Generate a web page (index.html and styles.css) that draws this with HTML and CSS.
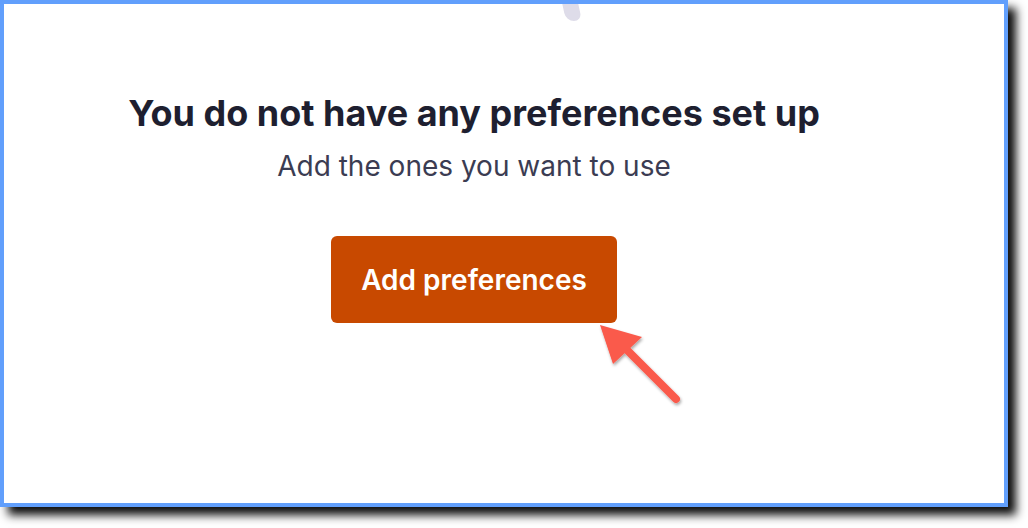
FILE: index.html
```html
<!DOCTYPE html>
<html lang="en">
<head>
    <meta charset="UTF-8">
    <meta name="viewport" content="width=device-width, initial-scale=1.0">
    <title>Preferences</title>
    <link rel="stylesheet" href="styles.css">
</head>
<body>
    <div class="frame">
        <div class="drop"></div>
        <div class="empty-state">
            <h1 class="empty-title">You do not have any preferences set up</h1>
            <p class="empty-text">Add the ones you want to use</p>
            <button class="add-button">Add preferences</button>
        </div>

        <!-- flecha de anotación -->
        <svg class="callout-arrow" width="110" height="110" viewBox="0 0 110 110">
            <defs>
                <filter id="shadow" x="-30%" y="-30%" width="160%" height="160%">
                    <feDropShadow dx="1" dy="2" stdDeviation="1.5" flood-color="#000" flood-opacity="0.35"/>
                </filter>
            </defs>
            <g filter="url(#shadow)">
                <line x1="22" y1="22" x2="80" y2="80" stroke="#fa5a4c" stroke-width="8" stroke-linecap="round"/>
                <polygon points="4,6 46,18 17,45" fill="#fa5a4c"/>
            </g>
        </svg>
    </div>
</body>
</html>
```

FILE: styles.css
```css
body {
    margin: 0;
    height: 528px;
    background-color: #fff;
    font-family: Inter, "Noto Sans", sans-serif;
}

.frame {
    position: relative;
    box-sizing: border-box;
    width: 1008px;
    height: 507px;
    border: 4px solid #619ffc;
    background: #fff;
    box-shadow: 8px 8px 9px rgba(0,0,0,0.95);
    overflow: hidden;
}

.drop {
    position: absolute;
    top: -20px;
    left: 558px;
    width: 16px;
    height: 37px;
    background: #dedce9;
    border-radius: 0 0 9px 9px / 0 0 9px 9px;
    transform: skewX(12deg);
}

.empty-state {
    width: 940px;
    display: flex;
    flex-direction: column;
    align-items: center;
    padding-top: 87px;
}

.empty-title {
    margin: 0;
    font-size: 36px;
    font-weight: 700;
    line-height: 44px;
    color: #1e1f30;
}

.empty-text {
    margin: 14px 0 0;
    font-size: 28px;
    line-height: 34px;
    color: #3b3c52;
}

.add-button {
    margin-top: 53px;
    width: 286px;
    height: 87px;
    border: none;
    border-radius: 6px;
    background-color: #c84900;
    color: #fff;
    font-family: Inter, "Noto Sans", sans-serif;
    font-size: 28px;
    font-weight: 600;
}

.callout-arrow {
    position: absolute;
    left: 592px;
    top: 315px;
}
```
